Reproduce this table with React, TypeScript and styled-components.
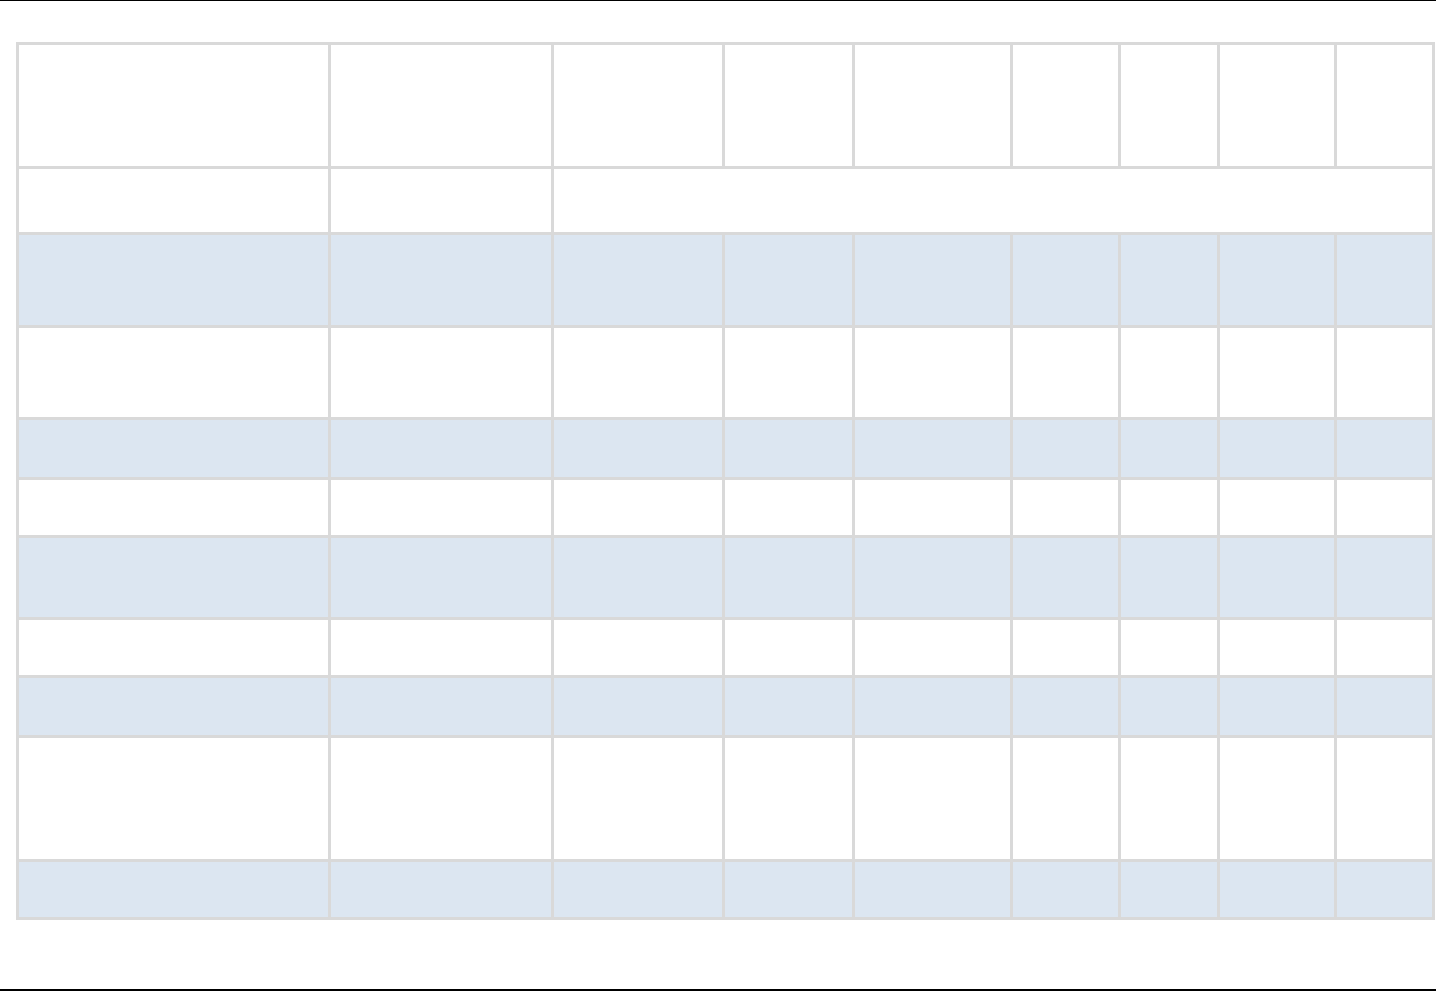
import React from 'react'
import styled, { createGlobalStyle } from 'styled-components'

const GlobalStyle = createGlobalStyle`
  html, body {
    margin: 0;
    padding: 0;
    background: #ffffff;
    font-family: 'Liberation Sans', Arial, sans-serif;
  }
`

const colWidths = [312, 223, 171, 130, 158, 108, 99, 117, 98]

// one entry per body row: height and whether it is shaded
const rows = [
  { height: 66, shaded: false, merged: true },
  { height: 93, shaded: true },
  { height: 92, shaded: false },
  { height: 60, shaded: true },
  { height: 58, shaded: false },
  { height: 82, shaded: true },
  { height: 58, shaded: false },
  { height: 60, shaded: true },
  { height: 124, shaded: false },
  { height: 58, shaded: true }
]

const App: React.FC = () => {
  return (
    <>
      <GlobalStyle />
      <Page>
        <Sheet>
          <colgroup>
            {colWidths.map((w, i) => (
              <col key={i} style={{ width: w }} />
            ))}
          </colgroup>
          <tbody>
            <Row height={124} shaded={false}>
              {colWidths.map((_, i) => (
                <Cell key={i} />
              ))}
            </Row>
            {rows.map((row, r) => (
              <Row key={r} height={row.height} shaded={row.shaded}>
                {row.merged ? (
                  <>
                    <Cell />
                    <Cell />
                    <Cell colSpan={colWidths.length - 2} />
                  </>
                ) : (
                  colWidths.map((_, i) => <Cell key={i} />)
                )}
              </Row>
            ))}
          </tbody>
        </Sheet>
      </Page>
    </>
  )
}

const Page = styled.div`
  box-sizing: border-box;
  height: 991px;
  border-top: 1px solid #000000;
  border-bottom: 2px solid #000000;
  padding: 41px 0 0 16px;
`

const Sheet = styled.table`
  border-collapse: collapse;
  table-layout: fixed;
  width: 1419px;
  border: 3px solid #d9d9d9;
`

const Row = styled.tr<{ height: number; shaded: boolean }>`
  height: ${props => props.height}px;
  background: ${props => (props.shaded ? '#dce6f1' : '#ffffff')};
`

const Cell = styled.td`
  border: 3px solid #d9d9d9;
  padding: 0;
`

export default App
